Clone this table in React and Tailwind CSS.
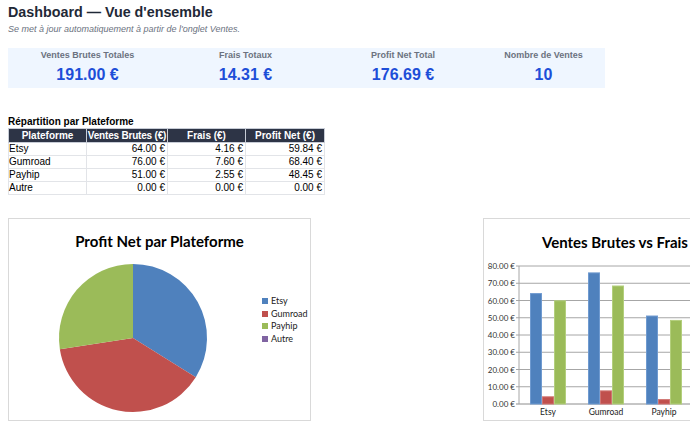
const stats = [
  { label: "Ventes Brutes Totales", value: "191.00 €", w: "w-[159px]" },
  { label: "Frais Totaux", value: "14.31 €", w: "w-[157px]" },
  { label: "Profit Net Total", value: "176.69 €", w: "w-[158px]" },
  { label: "Nombre de Ventes", value: "10", w: "w-[123px]" },
];

const rows = [
  { name: "Etsy", brut: 64, frais: 4.16, net: 59.84, color: "#4f81bd" },
  { name: "Gumroad", brut: 76, frais: 7.6, net: 68.4, color: "#c0504d" },
  { name: "Payhip", brut: 51, frais: 2.55, net: 48.45, color: "#9bbb59" },
  { name: "Autre", brut: 0, frais: 0, net: 0, color: "#8064a2" },
];

const eur = (n) => n.toFixed(2) + " €";

function PieChart() {
  const cx = 124, cy = 119, r = 74;
  const total = rows.reduce((s, x) => s + x.net, 0);
  let a = 0;
  const pt = (deg) => {
    const t = (deg * Math.PI) / 180;
    return [cx + r * Math.sin(t), cy - r * Math.cos(t)];
  };
  const slices = rows.filter((x) => x.net > 0).map((x) => {
    const start = a;
    const end = a + (x.net / total) * 360;
    a = end;
    const [x1, y1] = pt(start);
    const [x2, y2] = pt(end);
    const large = end - start > 180 ? 1 : 0;
    return <path key={x.name} d={`M${cx} ${cy} L${x1} ${y1} A${r} ${r} 0 ${large} 1 ${x2} ${y2} Z`} fill={x.color} />;
  });
  return (
    <svg width="301" height="201" className="font-['Lato'] block">
      <text x="150.5" y="28" textAnchor="middle" fontSize="15" fontWeight="700" fill="#000">Profit Net par Plateforme</text>
      {slices}
      {rows.map((x, i) => {
        const c = [82, 95, 107, 120][i];
        return (
          <g key={x.name}>
            <rect x="253" y={c - 3} width="6" height="6" fill={x.color} />
            <text x="262" y={c + 3} fontSize="9" fill="#222">{x.name}</text>
          </g>
        );
      })}
    </svg>
  );
}

function BarChart() {
  const left = 35, top = 47, bottom = 185;
  const scale = (bottom - top) / 80;
  const ticks = [0, 10, 20, 30, 40, 50, 60, 70, 80];
  const series = [
    { key: "brut", color: "#4f81bd", edge: "#6f9ad0", dx: -18 },
    { key: "frais", color: "#c0504d", edge: "#d07472", dx: -6 },
    { key: "net", color: "#9bbb59", edge: "#b3cf7c", dx: 6 },
  ];
  return (
    <svg width="300" height="201" className="font-['Lato'] block">
      <text x="58" y="29" fontSize="15" fontWeight="700" fill="#000">Ventes Brutes vs Frais</text>
      {ticks.map((t) => {
        const y = bottom - t * scale;
        return (
          <g key={t}>
            <line x1={left - 3} x2="300" y1={y} y2={y} stroke={t === 0 ? "#8c8c8c" : "#a6a6a6"} strokeWidth="1" />
            <text x={left - 4} y={y + 3} textAnchor="end" fontSize="8" fill="#333">{t.toFixed(2)} €</text>
          </g>
        );
      })}
      <line x1={left} x2={left} y1={top} y2={bottom} stroke="#a6a6a6" />
      {rows.slice(0, 3).map((r, i) => {
        const c = left + 29 + 58 * i;
        return (
          <g key={r.name}>
            {series.map((s) => {
              const h = r[s.key] * scale;
              return <rect key={s.key} x={c + s.dx + 0.5} y={bottom - h} width="11" height={h} fill={s.color} stroke={s.edge} strokeWidth="1" />;
            })}
            <text x={c} y="196" textAnchor="middle" fontSize="8.5" fill="#222">{r.name}</text>
          </g>
        );
      })}
    </svg>
  );
}

export default function App() {
  return (
    <div className="w-[698px] h-[427px] overflow-hidden bg-white font-['Liberation_Sans',Arial,sans-serif]">
      <div className="pl-2 pt-[3px]">
        <h1 className="text-[14.3px] leading-[18px] font-bold text-[#1f2937]">Dashboard — Vue d'ensemble</h1>
        <p className="mt-[2px] text-[9px] leading-[12px] italic text-[#6b7280]">Se met à jour automatiquement à partir de l'onglet Ventes.</p>

        <div className="mt-[13px] flex h-[40px] w-[597px] bg-[#eff6ff]">
          {stats.map((s) => (
            <div key={s.label} className={`${s.w} flex flex-col items-center pt-[2px]`}>
              <div className="text-[9px] leading-[11px] font-bold text-[#6b7280]">{s.label}</div>
              <div className="mt-[4px] text-[16px] leading-[20px] font-bold text-[#1d4ed8]">{s.value}</div>
            </div>
          ))}
        </div>

        <div className="mt-[28px] text-[10px] leading-[12px] font-bold text-black">Répartition par Plateforme</div>
        <table className="table-fixed w-[316px] border-collapse text-[10px] leading-[12px] text-black">
          <colgroup>
            <col className="w-[78px]" />
            <col className="w-[81px]" />
            <col className="w-[78px]" />
            <col className="w-[79px]" />
          </colgroup>
          <thead>
            <tr className="h-[14px] bg-[#2d3446] text-white whitespace-nowrap">
              <th className="border border-[#c7ccd6] font-bold text-center p-0">Plateforme</th>
              <th className="border border-[#c7ccd6] font-bold text-center p-0 tracking-[-0.2px]">Ventes Brutes (€)</th>
              <th className="border border-[#c7ccd6] font-bold text-center p-0">Frais (€)</th>
              <th className="border border-[#c7ccd6] font-bold text-center p-0">Profit Net (€)</th>
            </tr>
          </thead>
          <tbody>
            {rows.map((r) => (
              <tr key={r.name} className="h-[13px] whitespace-nowrap">
                <td className="border border-[#e2e4e8] px-0 py-0 text-left">{r.name}</td>
                <td className="border border-[#e2e4e8] py-0 pr-[2px] text-right">{eur(r.brut)}</td>
                <td className="border border-[#e2e4e8] py-0 pr-[2px] text-right">{eur(r.frais)}</td>
                <td className="border border-[#e2e4e8] py-0 pr-[2px] text-right">{eur(r.net)}</td>
              </tr>
            ))}
          </tbody>
        </table>

        <div className="mt-[23px] flex w-[682px] overflow-hidden">
          <div className="w-[303px] h-[203px] shrink-0 border border-[#d9d9d9]">
            <PieChart />
          </div>
          <div className="ml-[172px] w-[302px] h-[203px] shrink-0 border border-[#d9d9d9]">
            <BarChart />
          </div>
        </div>
      </div>
    </div>
  );
}
